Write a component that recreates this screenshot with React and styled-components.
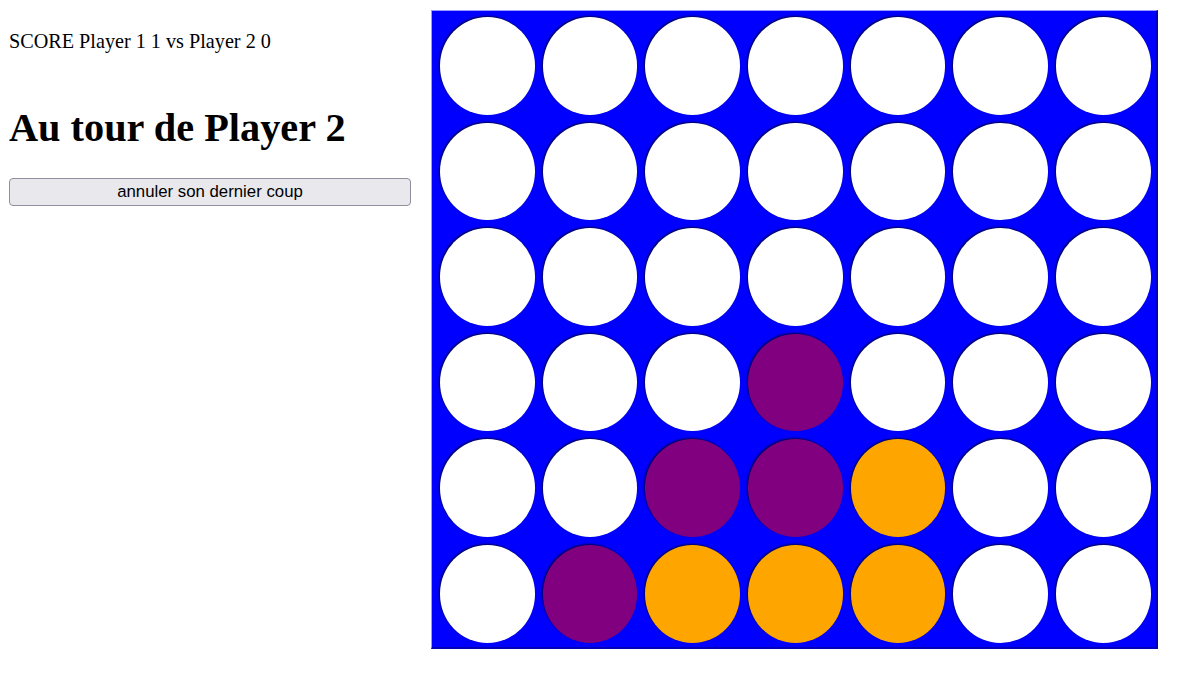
import styled, { createGlobalStyle } from 'styled-components'

const GlobalStyle = createGlobalStyle`
  body {
    margin: 8px 8px 8px 9px;
    background: #ffffff;
    font-family: "Liberation Serif", "Times New Roman", serif;
    color: #000000;
  }
`

// 0 = vide, 1 = Player 1 (violet), 2 = Player 2 (orange)
const grid = [
  [0, 0, 0, 0, 0, 0, 0],
  [0, 0, 0, 0, 0, 0, 0],
  [0, 0, 0, 0, 0, 0, 0],
  [0, 0, 0, 1, 0, 0, 0],
  [0, 0, 1, 1, 2, 0, 0],
  [0, 1, 2, 2, 2, 0, 0]
]

const colors = ['#ffffff', '#800080', '#ffa500']

function App () {
  return (
    <>
      <GlobalStyle />
      <Page>
        <Side>
          <Score>SCORE Player 1 1 vs Player 2 0</Score>
          <Turn>Au tour de Player 2</Turn>
          <UndoButton type='button'>annuler son dernier coup</UndoButton>
        </Side>
        <Board>
          {grid.map((row, r) =>
            row.map((cell, c) => (
              <Cell key={`${r}-${c}`}>
                <Disc $color={colors[cell]} />
              </Cell>
            ))
          )}
        </Board>
      </Page>
    </>
  )
}

export default App

const Page = styled.div`
  display: flex;
  align-items: flex-start;
  gap: 20px;
`

const Side = styled.div`
  width: 402px;
  display: flex;
  flex-direction: column;
`

const Score = styled.p`
  font-size: 20.2px;
  margin: 22px 0 0;
  line-height: 23px;
`

const Turn = styled.h1`
  font-size: 40.3px;
  font-weight: bold;
  line-height: 44px;
  margin: 53px 0 28px;
`

const UndoButton = styled.button`
  width: 100%;
  height: 28px;
  padding: 0 8px;
  font-family: "Liberation Sans", Arial, sans-serif;
  font-size: 16.8px;
  color: #000000;
  background: #e9e9ed;
  border: 1px solid #8f8f9d;
  border-radius: 4px;
`

const Board = styled.div`
  margin-top: 2px;
  display: grid;
  grid-template-columns: repeat(7, 102.7px);
  grid-template-rows: repeat(6, 105.6px);
  padding: 2px 1px 0 4px;
  background: #0000ff;
  border-top: 1px solid #9a9aff;
  border-left: 1px solid #9a9aff;
  border-right: 2px solid #0000b8;
  border-bottom: 2px solid #0000b8;
`

const Cell = styled.div`
  padding: 4px;
  box-sizing: border-box;
`

const Disc = styled.div`
  width: 100%;
  height: 100%;
  border-radius: 50%;
  background: ${p => p.$color};
  box-shadow: -1px -1px 2px rgba(0, 0, 40, 0.8);
`
